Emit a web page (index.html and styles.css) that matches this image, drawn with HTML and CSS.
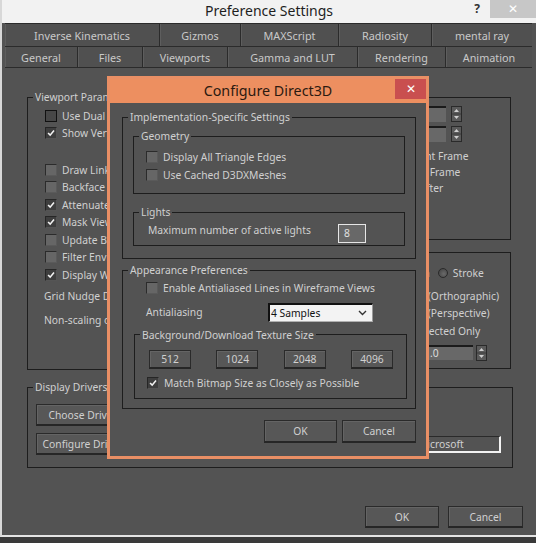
FILE: index.html
```html
<!DOCTYPE html>
<html>
<head>
<meta charset="utf-8">
<title>Preference Settings</title>
<link rel="stylesheet" href="styles.css">
</head>
<body>
<div class="window">
  <div class="titlebar">
    <span></span>
    <span class="title">Preference Settings</span>
    <div class="tb-right"><span class="help">?</span><span class="wclose">✕</span></div>
  </div>
  <div class="client">
    <div class="tabs">
      <div class="tabrow row1">
        <div class="tab">Inverse Kinematics</div>
        <div class="tab">Gizmos</div>
        <div class="tab">MAXScript</div>
        <div class="tab">Radiosity</div>
        <div class="tab">mental ray</div>
      </div>
      <div class="tabrow row2">
        <div class="tab">General</div>
        <div class="tab">Files</div>
        <div class="tab">Viewports</div>
        <div class="tab">Gamma and LUT</div>
        <div class="tab">Rendering</div>
        <div class="tab">Animation</div>
      </div>
    </div>
    <div class="panel">
      <div class="upper">
        <fieldset class="grp vp">
          <legend>Viewport Parameters</legend>
          <div class="gbody vp-body">
            <div class="row chk"><span class="box dark"></span>Use Dual Planes</div>
            <div class="row chk"><span class="box on"><svg viewBox="0 0 12 12"><polyline points="2.5,6 5,8.6 9.6,3"/></svg></span>Show Vertices as Dots</div>
            <div class="spacer"></div>
            <div class="row chk"><span class="box"></span>Draw Links as Lines</div>
            <div class="row chk"><span class="box"></span>Backface Cull on Object Creation</div>
            <div class="row chk"><span class="box on"><svg viewBox="0 0 12 12"><polyline points="2.5,6 5,8.6 9.6,3"/></svg></span>Attenuate Lights</div>
            <div class="row chk"><span class="box on"><svg viewBox="0 0 12 12"><polyline points="2.5,6 5,8.6 9.6,3"/></svg></span>Mask Viewport to Safe Region</div>
            <div class="row chk"><span class="box"></span>Update Background Image While Playing</div>
            <div class="row chk"><span class="box"></span>Filter Environment Backgrounds</div>
            <div class="row chk"><span class="box on"><svg viewBox="0 0 12 12"><polyline points="2.5,6 5,8.6 9.6,3"/></svg></span>Display World Axis</div>
            <div class="lrow">Grid Nudge Distance:</div>
            <div class="lrow">Non-scaling object size:</div>
          </div>
        </fieldset>
        <div class="rightcol">
          <fieldset class="grp ghost">
            <legend>Ghosting</legend>
            <div class="gbody ghost-body">
              <div class="spin s1"><span class="sl">Ghosting Frames:</span><span class="field f50">2</span><svg class="arrows" viewBox="0 0 11 16"><rect x="0.5" y="0.5" width="10" height="15"/><line x1="1" y1="8" x2="10" y2="8"/><polygon points="3,6 5.5,3 8,6"/><polygon points="3,10 5.5,13 8,10"/></svg></div>
              <div class="spin s2"><span class="sl">Display Every Nth Frame:</span><span class="field f50">1</span><svg class="arrows" viewBox="0 0 11 16"><rect x="0.5" y="0.5" width="10" height="15"/><line x1="1" y1="8" x2="10" y2="8"/><polygon points="3,6 5.5,3 8,6"/><polygon points="3,10 5.5,13 8,10"/></svg></div>
              <div class="rrow"><span class="radio"></span>Ghost Before Current Frame</div>
              <div class="rrow"><span class="radio"></span>Ghost After Current Frame</div>
              <div class="rrow"><span class="radio on"></span>Ghost Before and After</div>
            </div>
          </fieldset>
          <fieldset class="grp mouse">
            <legend>Mouse Control</legend>
            <div class="gbody mouse-body">
              <div class="mrow">Middle Button:<span class="ropt"><span class="radio on"></span>Pan/Zoom</span><span class="ropt"><span class="radio"></span>Stroke</span></div>
              <div class="row chk"><span class="box"></span>Zoom About Mouse Point (Orthographic)</div>
              <div class="row chk"><span class="box"></span>Zoom About Mouse Point (Perspective)</div>
              <div class="row chk"><span class="box"></span>Right Click Menus over Selected Only</div>
              <div class="spin s3"><span class="sl">Wheel Zoom Increment:</span><span class="field f53">1.0</span><svg class="arrows" viewBox="0 0 11 16"><rect x="0.5" y="0.5" width="10" height="15"/><line x1="1" y1="8" x2="10" y2="8"/><polygon points="3,6 5.5,3 8,6"/><polygon points="3,10 5.5,13 8,10"/></svg></div>
            </div>
          </fieldset>
        </div>
      </div>
      <fieldset class="grp drivers">
        <legend>Display Drivers</legend>
        <div class="gbody drv-body">
          <div class="btn drvbtn">Choose Driver...</div>
          <div class="drvrow">
            <div class="btn drvbtn">Configure Driver...</div>
            <div class="drvfield">Microsoft</div>
          </div>
        </div>
      </fieldset>
    </div>
    <div class="footer">
      <div class="btn okbtn">OK</div>
      <div class="btn cancelbtn">Cancel</div>
    </div>
  </div>

  <div class="dialog">
    <div class="dtitle">
      <span></span>
      <span class="dtitle-text">Configure Direct3D</span>
      <span class="dclose">✕</span>
    </div>
    <div class="dbody">
      <fieldset class="grp">
        <legend>Implementation-Specific Settings</legend>
        <div class="gbody impl-body">
          <fieldset class="grp">
            <legend>Geometry</legend>
            <div class="gbody geo-body">
              <div class="row chk"><span class="box"></span>Display All Triangle Edges</div>
              <div class="row chk"><span class="box"></span>Use Cached D3DXMeshes</div>
            </div>
          </fieldset>
          <fieldset class="grp lights">
            <legend>Lights</legend>
            <div class="gbody lights-body">
              <span class="ltext">Maximum number of active lights</span>
              <span class="numfield">8</span>
            </div>
          </fieldset>
        </div>
      </fieldset>
      <fieldset class="grp appear">
        <legend>Appearance Preferences</legend>
        <div class="gbody appear-body">
          <div class="row chk ind"><span class="box"></span>Enable Antialiased Lines in Wireframe Views</div>
          <div class="aarow ind">
            <span>Antialiasing</span>
            <div class="select"><span>4 Samples</span><svg viewBox="0 0 9 6"><polyline points="1,1 4.5,4.5 8,1"/></svg></div>
          </div>
          <fieldset class="grp tex">
            <legend>Background/Download Texture Size</legend>
            <div class="gbody tex-body">
              <div class="sizes">
                <div class="btn sbtn">512</div>
                <div class="btn sbtn">1024</div>
                <div class="btn sbtn">2048</div>
                <div class="btn sbtn">4096</div>
              </div>
              <div class="row chk match"><span class="box on"><svg viewBox="0 0 12 12"><polyline points="2.5,6 5,8.6 9.6,3"/></svg></span>Match Bitmap Size as Closely as Possible</div>
            </div>
          </fieldset>
        </div>
      </fieldset>
      <div class="dbuttons">
        <div class="btn dok">OK</div>
        <div class="btn dcancel">Cancel</div>
      </div>
    </div>
  </div>
</div>
</body>
</html>
```

FILE: styles.css
```css
* { box-sizing: border-box; }
html, body { margin: 0; padding: 0; }
body {
  width: 536px;
  height: 543px;
  overflow: hidden;
  background: #3a3a3a;
  font-family: "Noto Sans", "Open Sans", sans-serif;
  font-size: 10.3px;
  color: #d0d0d0;
}
.window {
  position: relative;
  width: 536px;
  height: 537px;
  border-left: 2px solid #d8d8d8;
  border-bottom: 2px solid #e4e4e4;
  background: #535353;
}

/* title bar */
.titlebar {
  height: 23px;
  background: #f2f2f2;
  display: grid;
  grid-template-columns: 1fr auto 1fr;
  align-items: start;
}
.title {
  font-size: 14px;
  line-height: 22px;
  color: #1e1e1e;
}
.tb-right { display: flex; justify-content: flex-end; align-items: flex-start; }
.help {
  font-size: 12px;
  font-weight: bold;
  color: #333;
  line-height: 17px;
  margin-right: 10px;
}
.wclose {
  width: 46px;
  height: 18px;
  background: #c7c7c7;
  color: #fff;
  font-size: 12px;
  line-height: 18px;
  text-align: center;
}

/* client */
.client { padding: 0 4px 0 3px; }
.tabrow {
  display: grid;
  height: 23px;
  border-top: 1px solid #2b2b2b;
  background: #505050;
}
.row1 { grid-template-columns: 155px 81px 98px 93px 1fr; }
.row2 {
  grid-template-columns: 73px 65px 85px 130px 88px 1fr;
  height: 22px;
  border-bottom: 1px solid #2b2b2b;
}
.tab {
  display: flex;
  align-items: center;
  justify-content: center;
  border-right: 1px solid #2b2b2b;
  box-shadow: inset 1px 0 #5e5e5e;
  font-size: 10.8px;
  color: #c9c9c9;
}
.tab:last-child { border-right: none; }

.panel { padding: 22px 21px 0 22px; }
.upper {
  display: grid;
  grid-template-columns: 238px minmax(0, 1fr);
  column-gap: 10px;
}

fieldset { margin: 0; }
.grp {
  padding: 0;
  min-width: 0;
  border: 1px solid #1d1d1d;
}
legend {
  padding: 0 2px;
  margin-left: 5px;
  line-height: 14px;
  color: #d0d0d0;
}

.row { height: 17.5px; display: flex; align-items: center; white-space: nowrap; }
.box {
  flex: none;
  width: 12px;
  height: 12px;
  margin-right: 5px;
  background: #666;
  border: 1px solid;
  border-color: #2b2b2b #5a5a5a #5a5a5a #2b2b2b;
  display: flex;
}
.box.dark { background: #474747; border-color: #111; }
.box.on { background: #3e3e3e; border-color: #262626 #555 #555 #262626; }
.box svg { width: 10px; height: 10px; }
.box polyline { fill: none; stroke: #f2f2f2; stroke-width: 1.9; }

.vp { height: 280px; }
.vp-body { padding: 3px 0 0 17px; overflow: hidden; }
.spacer { height: 19px; }
.lrow { height: 24px; display: flex; align-items: center; margin-left: -1px; white-space: nowrap; }

.rightcol { display: flex; flex-direction: column; gap: 5px; min-width: 0; }
.ghost { height: 150px; }
.ghost-body { padding: 0 48px 0 44px; overflow: hidden; }
.spin { display: flex; align-items: center; white-space: nowrap; }
.spin .sl { flex: 1; min-width: 0; overflow: hidden; }
.s1 { height: 19px; }
.s2 { height: 22px; margin-bottom: 3px; }
.field {
  flex: none;
  height: 16px;
  background: #686868;
  border-top: 2px solid #1b1b1b;
  border-left: 1px solid #2e2e2e;
  padding-left: 3px;
  line-height: 13px;
  color: #dcdcdc;
}
.f50 { width: 50px; }
.f53 { width: 53px; height: 15px; }
.arrows { width: 11px; height: 16px; margin-left: 5px; flex: none; }
.s3 .arrows { margin-left: 3px; }
.arrows rect { fill: #5a5a5a; stroke: #2a2a2a; }
.arrows line { stroke: #3a3a3a; }
.arrows polygon { fill: #cfcfcf; }

.rrow { height: 16px; display: flex; align-items: center; white-space: nowrap; }
.radio {
  flex: none;
  width: 10px;
  height: 10px;
  border-radius: 50%;
  margin-right: 5px;
  border: 1px solid #2a2a2a;
  background: radial-gradient(circle at 60% 60%, #6a6a6a, #3e3e3e);
  display: flex;
  align-items: center;
  justify-content: center;
}
.radio.on::after {
  content: "";
  width: 4px;
  height: 4px;
  border-radius: 50%;
  background: #e0e0e0;
}
.rrow .radio { margin-right: 4px; margin-left: -2px; }

.mouse { height: 124px; }
.mouse-body { padding: 5px 23px 0 9px; overflow: hidden; }
.mrow { height: 18px; margin-bottom: 5px; display: flex; align-items: center; white-space: nowrap; }
.ropt { display: flex; align-items: center; margin-left: 8px; }
.s3 { height: 20px; margin-top: 3px; }

.drivers { margin-top: 10px; margin-right: -2px; height: 88px; }
.drv-body { padding: 10px 11px 0 8px; }
.btn {
  display: flex;
  align-items: center;
  justify-content: center;
  background: #575757;
  border: 1px solid #2a2a2a;
  border-bottom: 2px solid #262626;
  box-shadow: inset 1px 1px #646464;
  color: #d0d0d0;
  white-space: nowrap;
}
.drvbtn { width: 100px; height: 22px; }
.drvrow { display: flex; align-items: center; margin-top: 7px; }
.drvfield {
  margin-left: auto;
  width: 88px;
  height: 17px;
  padding-left: 4px;
  border-top: 1px solid #2a2a2a;
  border-left: 1px solid #2a2a2a;
  border-right: 2px solid #f2f2f2;
  border-bottom: 2px solid #f2f2f2;
  line-height: 14px;
}

.footer {
  display: flex;
  justify-content: flex-end;
  gap: 9px;
  padding-right: 9px;
  margin-top: 38px;
}
.okbtn { width: 74px; height: 22px; }
.cancelbtn { width: 75px; height: 22px; }

/* dialog */
.dialog {
  position: absolute;
  left: 105px;
  top: 76px;
  width: 322px;
  height: 383px;
  border: 3px solid #e98f65;
  background: #535353;
  display: flex;
  flex-direction: column;
}
.dtitle {
  height: 24px;
  flex: none;
  background: #ed8f60;
  display: grid;
  grid-template-columns: 1fr auto 1fr;
  align-items: start;
}
.dtitle-text {
  font-size: 14.3px;
  line-height: 23px;
  color: #2b1a10;
}
.dclose {
  justify-self: end;
  width: 31px;
  height: 20px;
  background: #c94f4f;
  color: #fff;
  font-size: 12px;
  line-height: 20px;
  text-align: center;
}
.dbody { padding: 7px 10px 0 12px; }
.impl-body { padding: 5px 10px 12px 10px; }
.geo-body { padding: 5.5px 0 9.5px 12px; }
.lights { margin-top: 11px; }
.lights-body { padding: 5px 38px 2px 14px; display: flex; align-items: flex-start; }
.ltext { line-height: 14px; margin-top: -1px; }
.numfield {
  margin-left: auto;
  width: 28px;
  height: 19px;
  border: 1.5px solid #e6e6e6;
  background: #686868;
  padding-left: 5px;
  line-height: 16px;
  color: #e0e0e0;
}
.appear { margin-top: 4px; }
.appear-body { padding: 2.5px 8px 9px 11px; }
.ind { padding-left: 12px; }
.aarow {
  display: grid;
  grid-template-columns: 122px 105px;
  align-items: center;
  height: 19px;
  margin-top: 5.5px;
}
.select {
  height: 19px;
  background: #f3f3f3;
  border-top: 2px solid #111;
  border-left: 2px solid #111;
  border-right: 1px solid #9a9a9a;
  border-bottom: 1px solid #b0b0b0;
  color: #111;
  display: flex;
  align-items: center;
  justify-content: space-between;
  padding: 0 5px 0 1px;
}
.select svg { width: 9px; height: 6px; }
.select polyline { fill: none; stroke: #333; stroke-width: 1.4; }
.tex { margin-top: 6px; }
.tex-body { padding: 8px 13px 6.5px 14px; }
.sizes { display: flex; justify-content: space-between; }
.sbtn { width: 42px; height: 19px; }
.match { margin-top: 5.5px; margin-left: -2px; }
.dbuttons {
  display: flex;
  justify-content: flex-end;
  gap: 5px;
  margin-top: 11px;
}
.dok { width: 73px; height: 23px; }
.dcancel { width: 74px; height: 23px; }
```
